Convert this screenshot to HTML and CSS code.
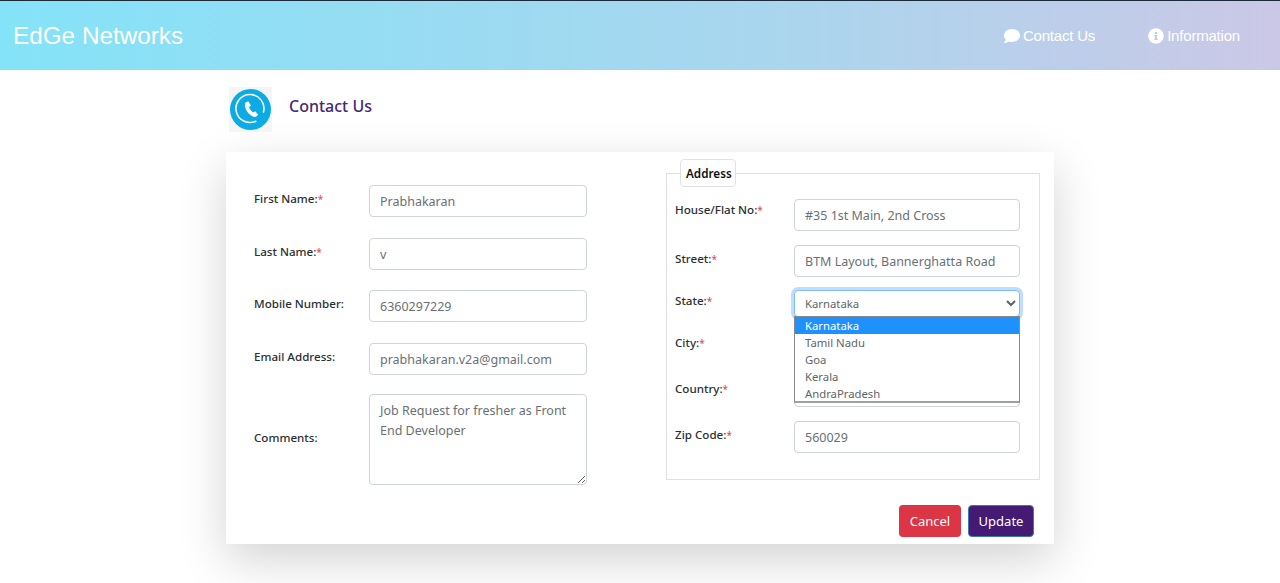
FILE: index.html
```html
<!DOCTYPE html>
<html lang="en">
<head>
    <meta charset="UTF-8">
    <meta name="viewport" content="width=device-width, initial-scale=1.0">
    <title>Contact Us</title>
    <link rel="stylesheet" href="styles.css">
</head>
<body>
    <header class="topbar">
        <div class="brand">EdGe Networks</div>
        <nav class="nav">
            <a class="nav-link nav-contact" href="#">
                <svg class="nav-icon" viewBox="0 0 512 512"><path d="M256 32C114.6 32 0 125.1 0 240c0 49.6 21.4 95 57 130.7C44.5 421.1 2.7 466 2.2 466.5c-2.2 2.3-2.8 5.7-1.5 8.7S4.8 480 8 480c66.3 0 116-31.8 140.6-51.4 32.7 12.3 69 19.4 107.4 19.4 141.4 0 256-93.1 256-208S397.4 32 256 32z"/></svg>
                Contact Us
            </a>
            <a class="nav-link" href="#">
                <svg class="nav-icon" viewBox="0 0 512 512"><path d="M256 8C119 8 8 119.1 8 256c0 137 111 248 248 248s248-111 248-248C504 119.1 393 8 256 8zm0 110c23.2 0 42 18.8 42 42s-18.8 42-42 42-42-18.8-42-42 18.8-42 42-42zm56 254c0 6.6-5.4 12-12 12h-88c-6.6 0-12-5.4-12-12v-24c0-6.6 5.4-12 12-12h12v-64h-12c-6.6 0-12-5.4-12-12v-24c0-6.6 5.4-12 12-12h64c6.6 0 12 5.4 12 12v100h12c6.6 0 12 5.4 12 12v24z"/></svg>
                Information
            </a>
        </nav>
    </header>

    <main class="container">
        <div class="page-title">
            <div class="title-icon">
                <svg viewBox="0 0 43 45" width="43" height="45">
                    <circle cx="21.5" cy="22.5" r="20.5" fill="#0cabe3"/>
                    <path d="M26.9 34.2A14 14 0 1 1 34.5 25.1" fill="none" stroke="#fff" stroke-width="1.5" stroke-linecap="round"/>
                    <path transform="translate(2.5 2.5) scale(.9)" d="M16 14.5l2.6-1.4 3 4.6-2 1.8c.6 2.6 2.2 4.6 4.5 6l2.3-1.4 3.3 4-2 1.9c-1.6 1-3.9.3-6.2-1.3-3.4-2.4-5.9-6-6.5-9.7-.3-2 0-3.7.5-4.5z" fill="#fff"/>
                </svg>
            </div>
            <h1>Contact Us</h1>
        </div>

        <form class="card">
            <div class="card-cols">
                <div class="personal">
                    <div class="row">
                        <label>First Name:<span class="req">*</span></label>
                        <input type="text" value="Prabhakaran">
                    </div>
                    <div class="row">
                        <label>Last Name:<span class="req">*</span></label>
                        <input type="text" value="v">
                    </div>
                    <div class="row">
                        <label>Mobile Number:</label>
                        <input type="text" value="6360297229">
                    </div>
                    <div class="row">
                        <label>Email Address:</label>
                        <input type="text" value="prabhakaran.v2a@gmail.com">
                    </div>
                    <div class="row row-comments">
                        <label>Comments:</label>
                        <textarea>Job Request for fresher as Front End Developer</textarea>
                    </div>
                </div>

                <fieldset class="address">
                    <legend>Address</legend>
                    <div class="addr-row tight">
                        <label>House/Flat No:<span class="req">*</span></label>
                        <input type="text" value="#35 1st Main, 2nd Cross">
                    </div>
                    <div class="addr-row">
                        <label>Street:<span class="req">*</span></label>
                        <input type="text" value="BTM Layout, Bannerghatta Road">
                    </div>
                    <div class="addr-row tight state-row">
                        <label>State:<span class="req">*</span></label>
                        <div class="select-wrap">
                            <select>
                                <option>Karnataka</option>
                            </select>
                            <ul class="dropdown">
                                <li class="selected">Karnataka</li>
                                <li>Tamil Nadu</li>
                                <li>Goa</li>
                                <li>Kerala</li>
                                <li>AndraPradesh</li>
                            </ul>
                        </div>
                    </div>
                    <div class="addr-row city-row">
                        <label>City:<span class="req">*</span></label>
                        <input type="text">
                    </div>
                    <div class="addr-row">
                        <label>Country:<span class="req">*</span></label>
                        <input type="text">
                    </div>
                    <div class="addr-row">
                        <label>Zip Code:<span class="req">*</span></label>
                        <input type="text" value="560029">
                    </div>
                </fieldset>
            </div>

            <div class="actions">
                <button type="button" class="btn btn-cancel">Cancel</button>
                <button type="button" class="btn btn-update">Update</button>
            </div>
        </form>
    </main>
</body>
</html>
```
FILE: styles.css
```css
* {
    box-sizing: border-box;
}
body {
    font-family: 'Noto Sans', 'Open Sans', sans-serif;
    background-color: #fff;
    color: #212529;
    margin: 0;
    padding: 0;
    overflow: hidden;
    height: 583px;
}
.topbar {
    height: 70px;
    display: flex;
    align-items: center;
    justify-content: space-between;
    padding: 0 40px 0 13px;
    border-top: 1px solid #1b2a38;
    background: linear-gradient(90deg, #84e3f8 0%, #a9d6ee 60%, #cbc8e6 100%);
    font-family: 'Liberation Sans', Arial, sans-serif;
    color: #fff;
}
.brand {
    font-size: 24.3px;
}
.nav {
    display: flex;
    gap: 53px;
}
.nav-link {
    display: flex;
    align-items: center;
    gap: 3px;
    font-size: 15px;
    letter-spacing: -0.2px;
    color: #fff;
    text-decoration: none;
}
.nav-icon {
    width: 16px;
    height: 16px;
    fill: #fff;
}
.container {
    width: 828px;
    margin-left: 226px;
}
.page-title {
    display: flex;
    align-items: center;
    height: 82px;
    padding-left: 3px;
}
.title-icon {
    width: 43px;
    height: 45px;
    margin-right: 17px;
    margin-bottom: 3px;
    background-color: #f3f5f6;
}
.page-title h1 {
    margin: 0 0 11px;
    font-size: 16px;
    font-weight: 500;
    color: #432a72;
}
.card {
    height: 392px;
    padding: 7px 14px 7px 28px;
    background-color: #fff;
    box-shadow: 0 16px 48px rgba(0, 0, 0, 0.175);
    border-radius: 2px;
}
.card-cols {
    display: grid;
    grid-template-columns: 333px 374px;
    column-gap: 79px;
}
.personal {
    display: flex;
    flex-direction: column;
    gap: 20.5px;
    padding-top: 26px;
}
.row, .addr-row {
    display: flex;
    align-items: flex-start;
}
.row label {
    width: 115px;
    padding-top: 5px;
}
.row-comments {
    align-items: center;
    margin-top: -1px;
}
.row-comments label {
    padding: 0 0 4px;
}
label {
    font-size: 11.6px;
    line-height: 18px;
    font-weight: 500;
    color: #2b2f33;
}
.req {
    font-size: 10px;
    color: #e0525f;
}
input, textarea, select {
    font-family: inherit;
    font-size: 12.5px;
    color: #6a7076;
    background-color: #fff;
    border: 1px solid #ced4da;
    border-radius: 4px;
    outline: none;
}
input {
    width: 218px;
    height: 32px;
    padding: 1px 10px 0;
}
textarea {
    width: 218px;
    height: 91px;
    padding: 6px 10px;
    line-height: 20px;
}
.address {
    height: 321px;
    margin: 0;
    padding: 0 19px 0 8px;
    border: 1px solid #dee2e6;
    border-radius: 0;
}
.address legend {
    width: 56px;
    height: 28px;
    margin-left: 5px;
    padding: 0 0 0 5px;
    font-size: 11.7px;
    font-weight: 600;
    line-height: 26px;
    color: #111;
    background-color: #fff;
    border: 1px solid #dee2e6;
    border-radius: 4px;
}
.addr-row {
    margin-top: 14px;
}
.addr-row:first-of-type {
    margin-top: 12px;
}
.addr-row label {
    width: 119px;
    padding-top: 4.5px;
}
.addr-row input, .select-wrap {
    width: 226px;
}
.addr-row.tight label {
    padding-top: 1.5px;
}
.state-row {
    margin-top: 13px;
}
.city-row {
    margin-top: 12px;
}
.select-wrap {
    position: relative;
}
select {
    display: block;
    width: 100%;
    height: 27px;
    padding: 0 6px;
    font-size: 11.3px;
    color: #5f6468;
    border-color: #80bdff;
    box-shadow: 0 0 0 3px rgba(0, 123, 255, 0.25);
}
.dropdown {
    position: absolute;
    top: 26px;
    left: 0;
    width: 100%;
    height: 87px;
    margin: 0;
    padding: 0;
    list-style: none;
    font-size: 11.3px;
    line-height: 17px;
    color: #5f6468;
    background-color: #fff;
    border: 1px solid #8a8a8a;
    border-bottom: 2px solid #a0a0a0;
    overflow: hidden;
}
.dropdown li {
    height: 17px;
    padding-left: 10px;
}
.dropdown .selected {
    background-color: #1e90ff;
    color: #fff;
}
.actions {
    display: flex;
    justify-content: flex-end;
    gap: 7px;
    margin-top: 20px;
    margin-right: 6px;
}
.btn {
    height: 32px;
    padding: 0;
    font-family: inherit;
    font-size: 13px;
    color: #fff;
    border: 1px solid transparent;
    border-radius: 4px;
}
.btn-cancel {
    width: 62px;
    background-color: #dc3545;
}
.btn-update {
    width: 66px;
    background-color: #451a72;
    border-color: #3f77b5;
}
```
